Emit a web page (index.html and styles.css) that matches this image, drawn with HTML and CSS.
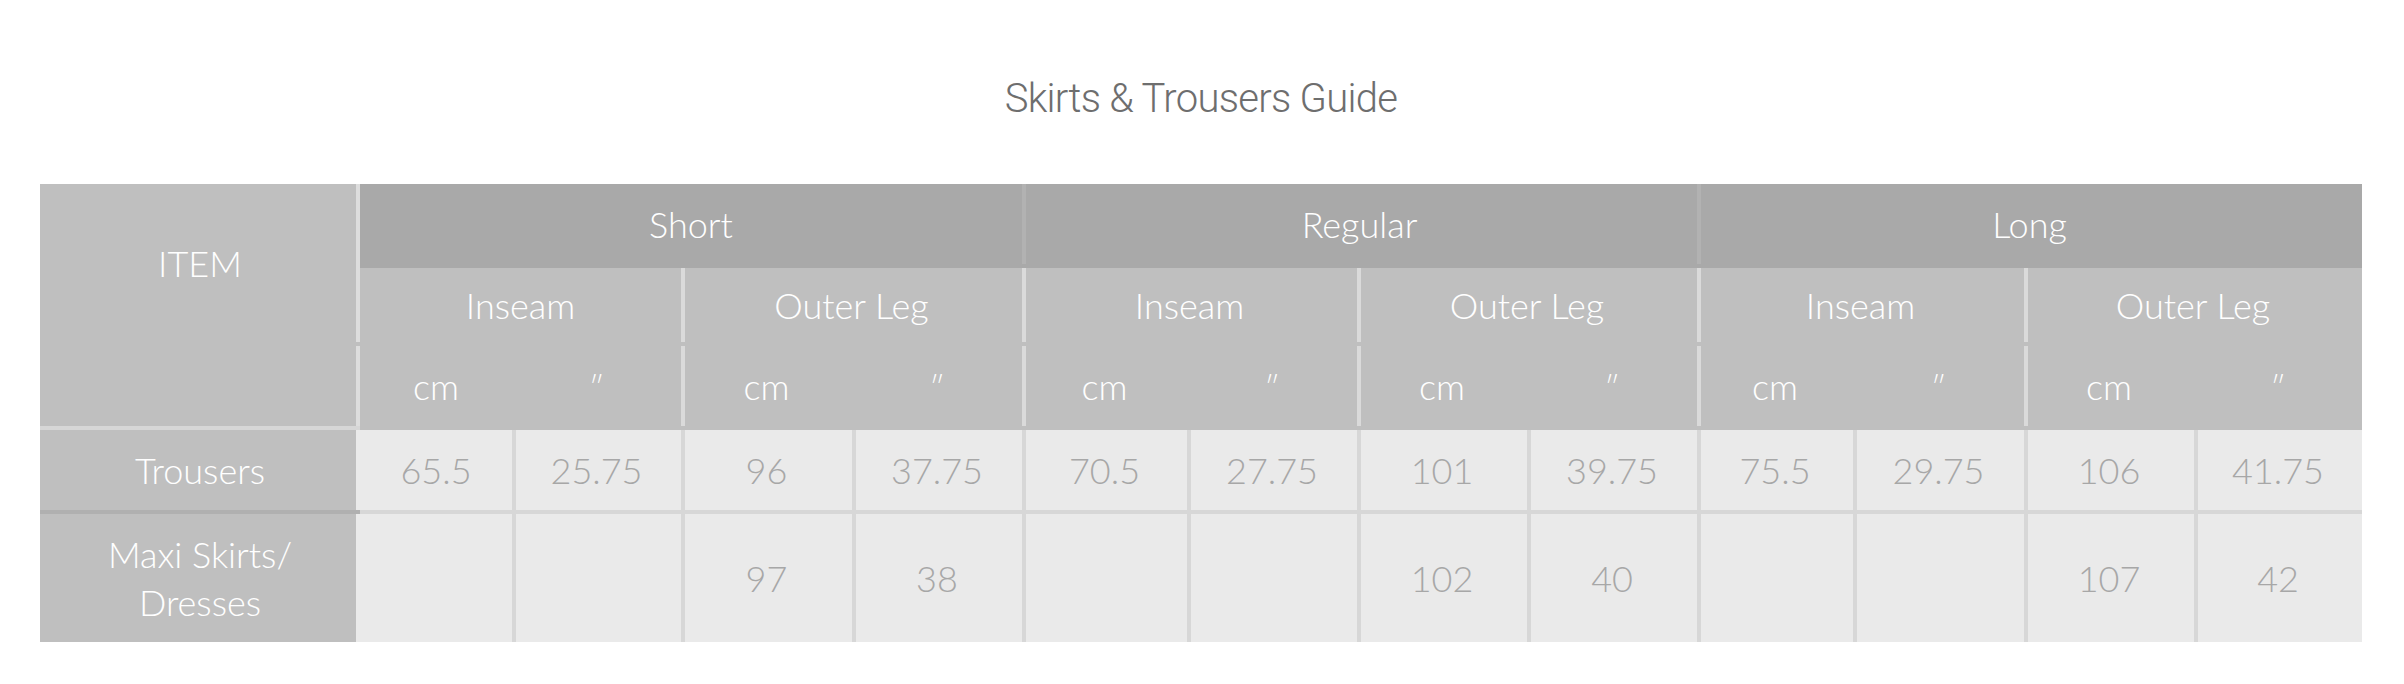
FILE: index.html
```html
<!DOCTYPE html>
<html lang="en">
<head>
<meta charset="utf-8">
<title>Skirts &amp; Trousers Guide</title>
<link rel="stylesheet" href="styles.css">
</head>
<body>
<div class="page">
  <h1 class="title">Skirts &amp; Trousers Guide</h1>
  <table class="guide">
    <colgroup>
      <col class="c-item">
      <col style="width:152px"><col style="width:169px"><col style="width:171px"><col style="width:170px">
      <col style="width:165px"><col style="width:170px"><col style="width:170px"><col style="width:170px">
      <col style="width:156px"><col style="width:171px"><col style="width:170px"><col style="width:168px">
    </colgroup>
    <thead>
      <tr class="r1">
        <th class="item" rowspan="2">ITEM</th>
        <th colspan="4">Short</th>
        <th class="sep" colspan="4">Regular</th>
        <th class="sep" colspan="4">Long</th>
      </tr>
      <tr class="r2">
        <th colspan="2">Inseam</th>
        <th class="sep" colspan="2">Outer Leg</th>
        <th class="sep" colspan="2">Inseam</th>
        <th class="sep" colspan="2">Outer Leg</th>
        <th class="sep" colspan="2">Inseam</th>
        <th class="sep" colspan="2">Outer Leg</th>
      </tr>
      <tr class="r3">
        <th class="item-blank"></th>
        <th>cm</th><th class="inch">″</th>
        <th class="sep">cm</th><th class="inch">″</th>
        <th class="sep">cm</th><th class="inch">″</th>
        <th class="sep">cm</th><th class="inch">″</th>
        <th class="sep">cm</th><th class="inch">″</th>
        <th class="sep">cm</th><th class="inch">″</th>
      </tr>
    </thead>
    <tbody>
      <tr class="r4">
        <th class="label">Trousers</th>
        <td>65.5</td><td class="sep">25.75</td><td class="sep">96</td><td class="sep">37.75</td>
        <td class="sep">70.5</td><td class="sep">27.75</td><td class="sep">101</td><td class="sep">39.75</td>
        <td class="sep">75.5</td><td class="sep">29.75</td><td class="sep">106</td><td class="sep">41.75</td>
      </tr>
      <tr class="r5">
        <th class="label">Maxi Skirts/<br>Dresses</th>
        <td></td><td class="sep"></td><td class="sep">97</td><td class="sep">38</td>
        <td class="sep"></td><td class="sep"></td><td class="sep">102</td><td class="sep">40</td>
        <td class="sep"></td><td class="sep"></td><td class="sep">107</td><td class="sep">42</td>
      </tr>
    </tbody>
  </table>
</div>
</body>
</html>
```

FILE: styles.css
```css
html, body {
  margin: 0;
  padding: 0;
  background: #ffffff;
}

.page {
  padding: 75px 42px 0 40px;
}

.title {
  margin: 0 0 61px;
  font-family: Roboto, "Liberation Sans", sans-serif;
  font-weight: 300;
  font-size: 40px;
  line-height: 48px;
  color: #6e6e6e;
  text-align: center;
  letter-spacing: -0.7px;
}

.guide {
  width: 2322px;
  table-layout: fixed;
  border-collapse: separate;
  border-spacing: 0;
  font-family: Lato, "Open Sans", sans-serif;
  font-weight: 300;
  font-size: 36px;
}

.c-item {
  width: 320px;
}

.guide th,
.guide td {
  padding: 0;
  text-align: center;
  vertical-align: middle;
  font-weight: 300;
  line-height: 48px;
}

/* header rows */
.guide thead th {
  color: #ffffff;
}

.r1 { height: 84px; }
.r2 { height: 78px; }
.r3 { height: 84px; }
.r4 { height: 84px; }
.r5 { height: 128px; }

.r1 th {
  background: #a9a9a9;
  border-bottom: 4px solid #a9a9a9;
}
.r1 th.sep {
  box-shadow: inset 4px 0 0 #b2b2b2;
}

.guide th.item {
  background: #bfbfbf;
  border-bottom: 4px solid #bfbfbf;
  box-shadow: inset -4px 0 0 #dddddd;
}

.r2 th,
.r3 th {
  background: #bfbfbf;
  border-bottom: 4px solid #bfbfbf;
}
.r2 th.sep,
.r3 th.sep {
  box-shadow: inset 4px 0 0 #dadada;
}

.r3 th.item-blank {
  border-bottom-color: #d6d6d6;
  box-shadow: inset -4px 0 0 #dddddd;
}

.r3 th.inch {
  font-size: 30px;
}

/* body rows */
.guide tbody th.label {
  background: #bfbfbf;
  color: #ffffff;
  box-shadow: inset -4px 0 0 #eaeaea;
}

.guide tbody td {
  background: #eaeaea;
  color: #a7a7a7;
}
.guide tbody td.sep {
  box-shadow: inset 4px 0 0 #d7d7d7;
}

.r4 th.label {
  border-bottom: 4px solid #b0b0b0;
}
.r4 td {
  border-bottom: 4px solid #d7d7d7;
}
```
